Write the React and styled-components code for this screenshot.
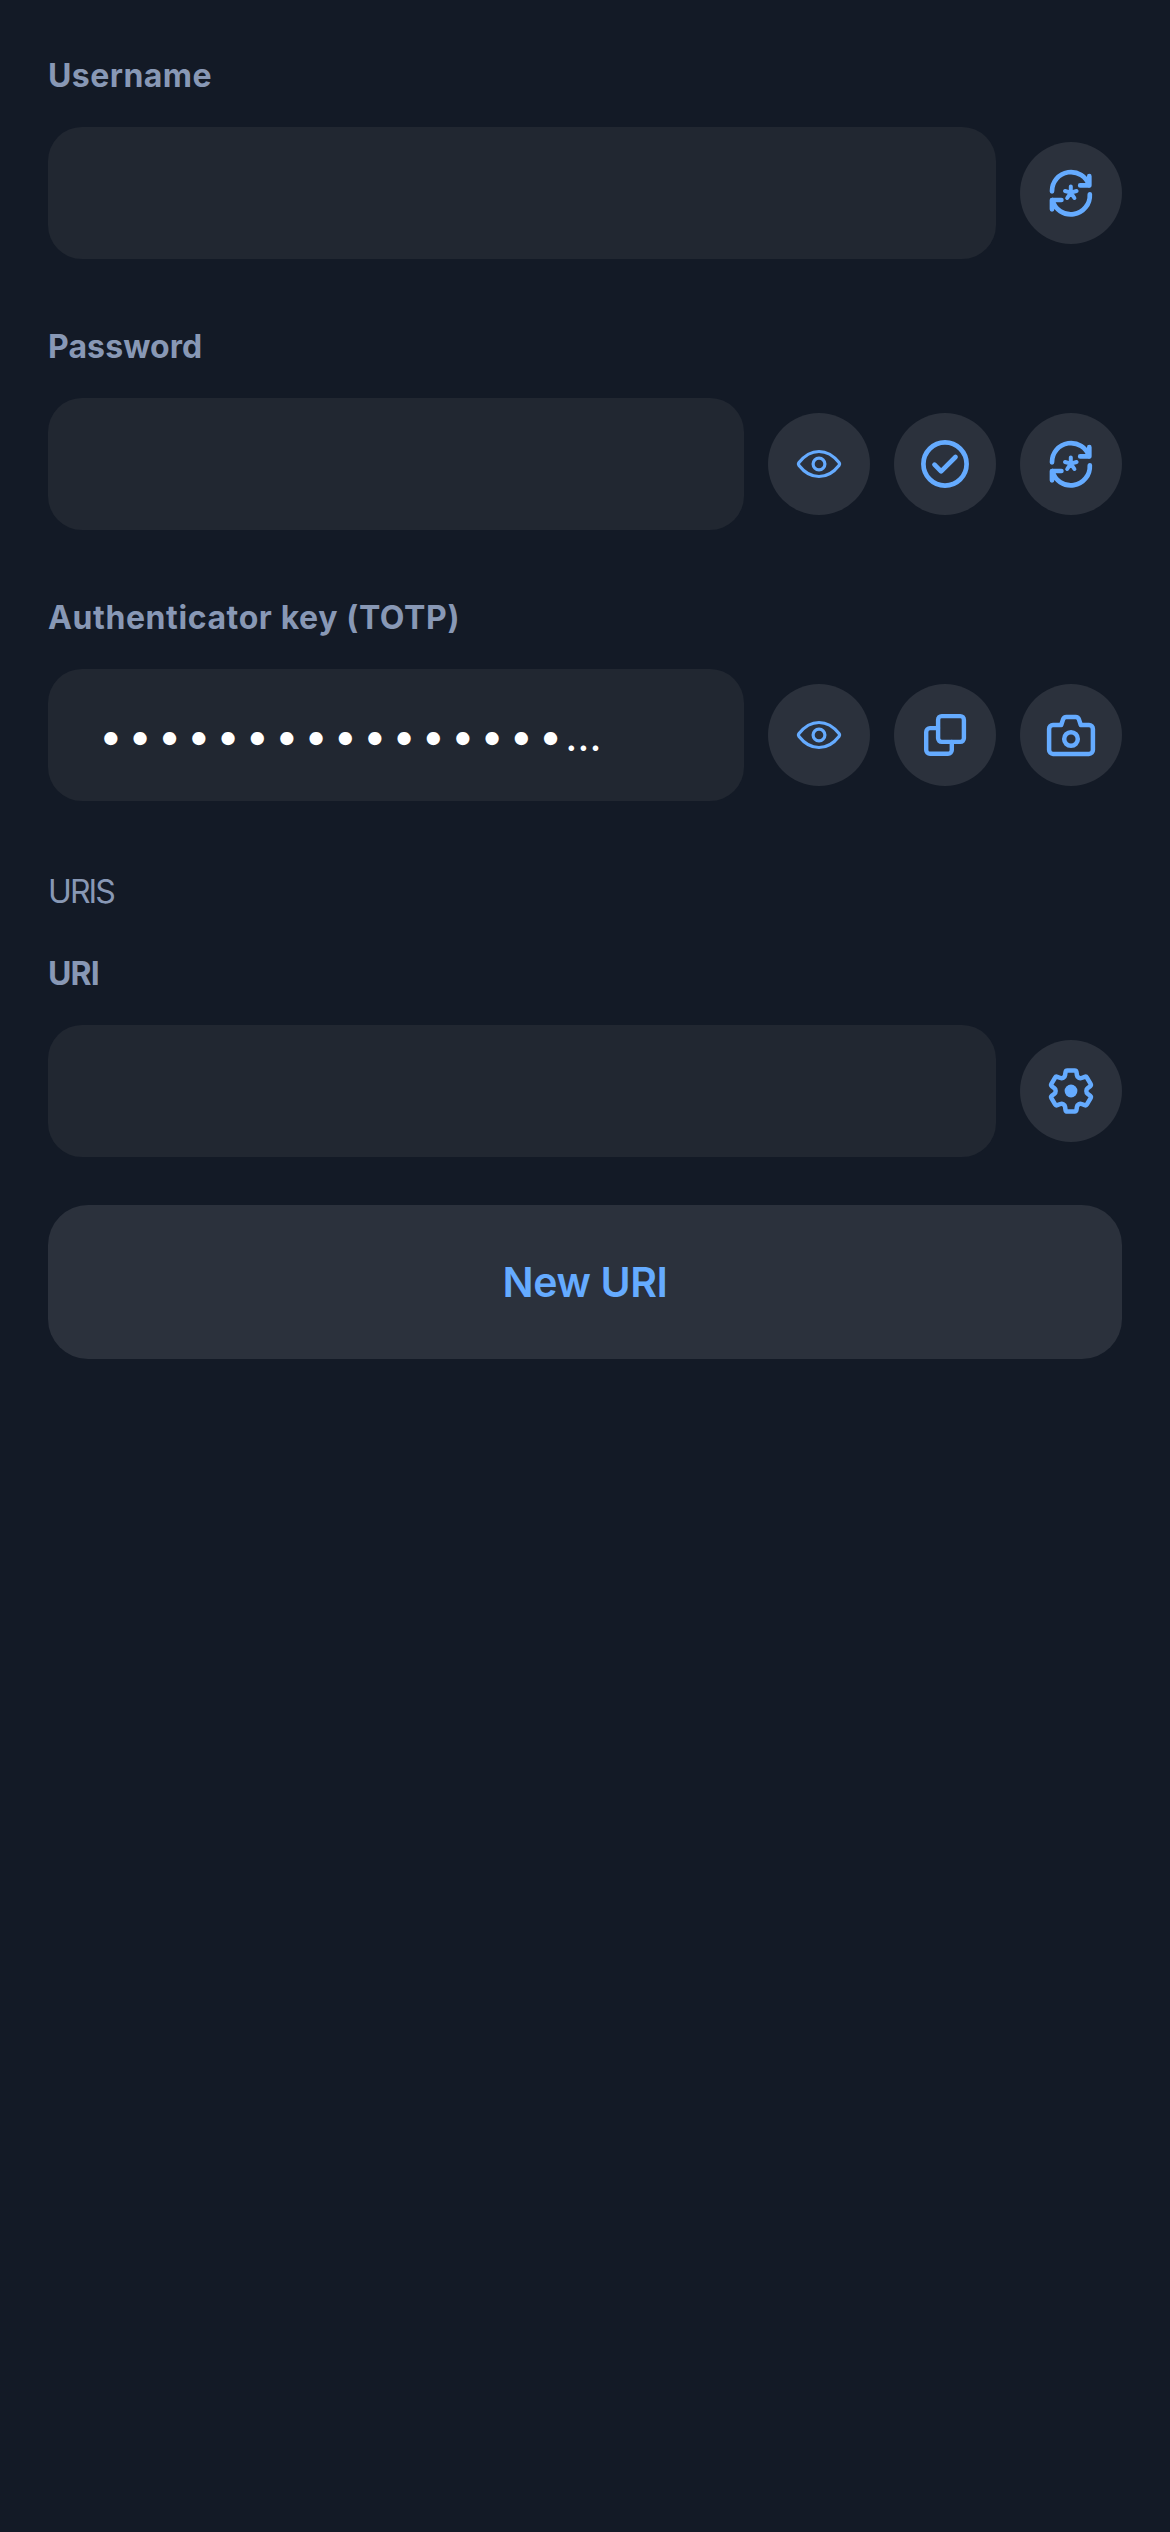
import React from "react";
import styled, { createGlobalStyle } from "styled-components";

const GlobalStyle = createGlobalStyle`
  *, *::before, *::after { box-sizing: border-box; }
  body {
    margin: 0;
    background: #131a26;
    font-family: Inter, "Open Sans", sans-serif;
  }
`;

const Screen = styled.main`
  display: flex;
  flex-direction: column;
  min-height: 2532px;
  padding: 56px 48px 0;
  background: #131a26;
`;

const Fields = styled.section`
  display: flex;
  flex-direction: column;
  gap: 68px;
`;

const Group = styled.div`
  display: flex;
  flex-direction: column;
  gap: 31px;
`;

const Label = styled.label`
  height: 40px;
  font-size: 32px;
  line-height: 40px;
  font-weight: 700;
  letter-spacing: ${(p) => p.$tracking || 0}px;
  color: #8898b5;
  white-space: nowrap;
`;

const SectionTitle = styled.h2`
  margin: 71px 0 42px;
  height: 40px;
  font-size: 32px;
  line-height: 40px;
  font-weight: 400;
  letter-spacing: -1.9px;
  color: #8898b5;
`;

const Row = styled.div`
  display: flex;
  align-items: center;
  gap: 24px;
`;

const Field = styled.div`
  display: flex;
  align-items: center;
  flex: 1;
  min-width: 0;
  height: 132px;
  padding: 2px 51px 0;
  border-radius: 34px;
  background: #212731;
`;

const Masked = styled.span`
  font-size: 42px;
  line-height: 60px;
  letter-spacing: 5.7px;
  color: #ffffff;
  white-space: nowrap;
`;

const Ellipsis = styled.span`
  margin-left: -3px;
  letter-spacing: 0;
`;

const RoundButton = styled.button`
  display: flex;
  flex: none;
  width: 102px;
  height: 102px;
  padding: 0;
  border: 0;
  border-radius: 50%;
  background: #2b313c;
  color: #65abff;
`;

const Glyph = styled.svg`
  width: 102px;
  height: 102px;
  fill: none;
  stroke: currentColor;
  stroke-width: ${(p) => p.$weight || 4.4};
  stroke-linecap: round;
  stroke-linejoin: round;
`;

const WideButton = styled.button`
  display: flex;
  align-items: center;
  justify-content: center;
  flex: none;
  height: 154px;
  margin-top: 48px;
  padding: 0;
  border: 0;
  border-radius: 40px;
  background: #2b313c;
  color: #65abff;
  font-family: inherit;
  font-size: 41px;
  line-height: 50px;
  font-weight: 600;
  letter-spacing: -0.4px;
`;

const GenerateIcon = () => (
  <Glyph viewBox="0 0 102 102" $weight={4.7}>
    <path d="M32 49.3A19 19 0 0 1 69.2 43.6M69.3 34.2V43.4H60.2" />
    <path d="M69.8 52.3A19 19 0 0 1 32.4 58M32 67.3V58H41.4" />
    <path
      strokeWidth="4"
      d="M50.8 50.6V44.6M50.8 50.6L45 49M50.8 50.6L56.6 49M50.8 50.6L47.2 56M50.8 50.6L54.4 56"
    />
  </Glyph>
);

const EyeIcon = () => (
  <Glyph viewBox="0 0 102 102" $weight={3.2}>
    <path d="M31 49.6C36.2 43 42.8 38.5 51 38.5S65.8 43 71 49.6Q72.1 51 71 52.4C65.8 59 59.2 63.5 51 63.5S36.2 59 31 52.4Q29.9 51 31 49.6Z" />
    <circle cx="51" cy="51" r="5.9" />
  </Glyph>
);

const CheckIcon = () => (
  <Glyph viewBox="0 0 102 102" $weight={4.7}>
    <circle cx="51" cy="51" r="21.6" />
    <path d="M40.5 51.7L47.1 58.3L61.5 44" />
  </Glyph>
);

const CopyIcon = () => (
  <Glyph viewBox="0 0 102 102">
    <rect x="44.1" y="32.1" width="25.8" height="25.8" rx="3.6" />
    <path d="M44 44.1H36a3.8 3.8 0 0 0-3.8 3.8V66a3.8 3.8 0 0 0 3.8 3.8H54a3.8 3.8 0 0 0 3.8-3.8V58" />
  </Glyph>
);

const CameraIcon = () => (
  <Glyph viewBox="0 0 102 102" $weight={4.5}>
    <path d="M33 41H41.2L43 35.6Q43.9 33.1 46.4 33.1H55.6Q58.1 33.1 59 35.6L60.8 41H69a3.9 3.9 0 0 1 3.9 3.9V66a3.9 3.9 0 0 1-3.9 3.9H33a3.9 3.9 0 0 1-3.9-3.9V44.9A3.9 3.9 0 0 1 33 41Z" />
    <circle cx="51" cy="55" r="6.8" />
  </Glyph>
);

const toothPoints = [
  [-6.2, 14.2],
  [-5.2, 20.5],
  [5.2, 20.5],
  [6.2, 14.2],
];

const gearPath = (() => {
  const pts = [];
  for (let i = 0; i < 6; i += 1) {
    const a = (i * Math.PI) / 3;
    toothPoints.forEach(([u, r]) => {
      pts.push([
        51 + u * Math.cos(a) + r * Math.sin(a),
        51 + u * Math.sin(a) - r * Math.cos(a),
      ]);
    });
  }
  const toward = (from, to, d) => {
    const len = Math.hypot(to[0] - from[0], to[1] - from[1]);
    const t = Math.min(d / len, 0.5);
    return [from[0] + (to[0] - from[0]) * t, from[1] + (to[1] - from[1]) * t];
  };
  const f = (p) => p.map((n) => n.toFixed(2)).join(" ");
  return (
    pts
      .map((p, i) => {
        const before = toward(p, pts[(i + pts.length - 1) % pts.length], 1.5);
        const after = toward(p, pts[(i + 1) % pts.length], 1.5);
        return `${i ? "L" : "M"}${f(before)}Q${f(p)} ${f(after)}`;
      })
      .join("") + "Z"
  );
})();

const GearIcon = () => (
  <Glyph viewBox="0 0 102 102" $weight={4.5}>
    <path d={gearPath} />
    <circle cx="51" cy="51" r="6.4" fill="currentColor" stroke="none" />
  </Glyph>
);

const Action = ({ label, icon: Icon }) => (
  <RoundButton type="button" aria-label={label}>
    <Icon />
  </RoundButton>
);

export default function App() {
  return (
    <>
      <GlobalStyle />
      <Screen>
        <Fields>
          <Group>
            <Label $tracking={0.45}>Username</Label>
            <Row>
              <Field />
              <Action label="Generate username" icon={GenerateIcon} />
            </Row>
          </Group>
          <Group>
            <Label $tracking={0.1}>Password</Label>
            <Row>
              <Field />
              <Action label="Show password" icon={EyeIcon} />
              <Action label="Check password" icon={CheckIcon} />
              <Action label="Generate password" icon={GenerateIcon} />
            </Row>
          </Group>
          <Group>
            <Label $tracking={0.6}>Authenticator key (TOTP)</Label>
            <Row>
              <Field>
                <Masked>
                  {"•".repeat(16)}
                  <Ellipsis>…</Ellipsis>
                </Masked>
              </Field>
              <Action label="Show key" icon={EyeIcon} />
              <Action label="Copy key" icon={CopyIcon} />
              <Action label="Scan code" icon={CameraIcon} />
            </Row>
          </Group>
        </Fields>
        <SectionTitle>URIS</SectionTitle>
        <Group>
          <Label $tracking={-0.9}>URI</Label>
          <Row>
            <Field />
            <Action label="URI settings" icon={GearIcon} />
          </Row>
        </Group>
        <WideButton type="button">New URI</WideButton>
      </Screen>
    </>
  );
}
